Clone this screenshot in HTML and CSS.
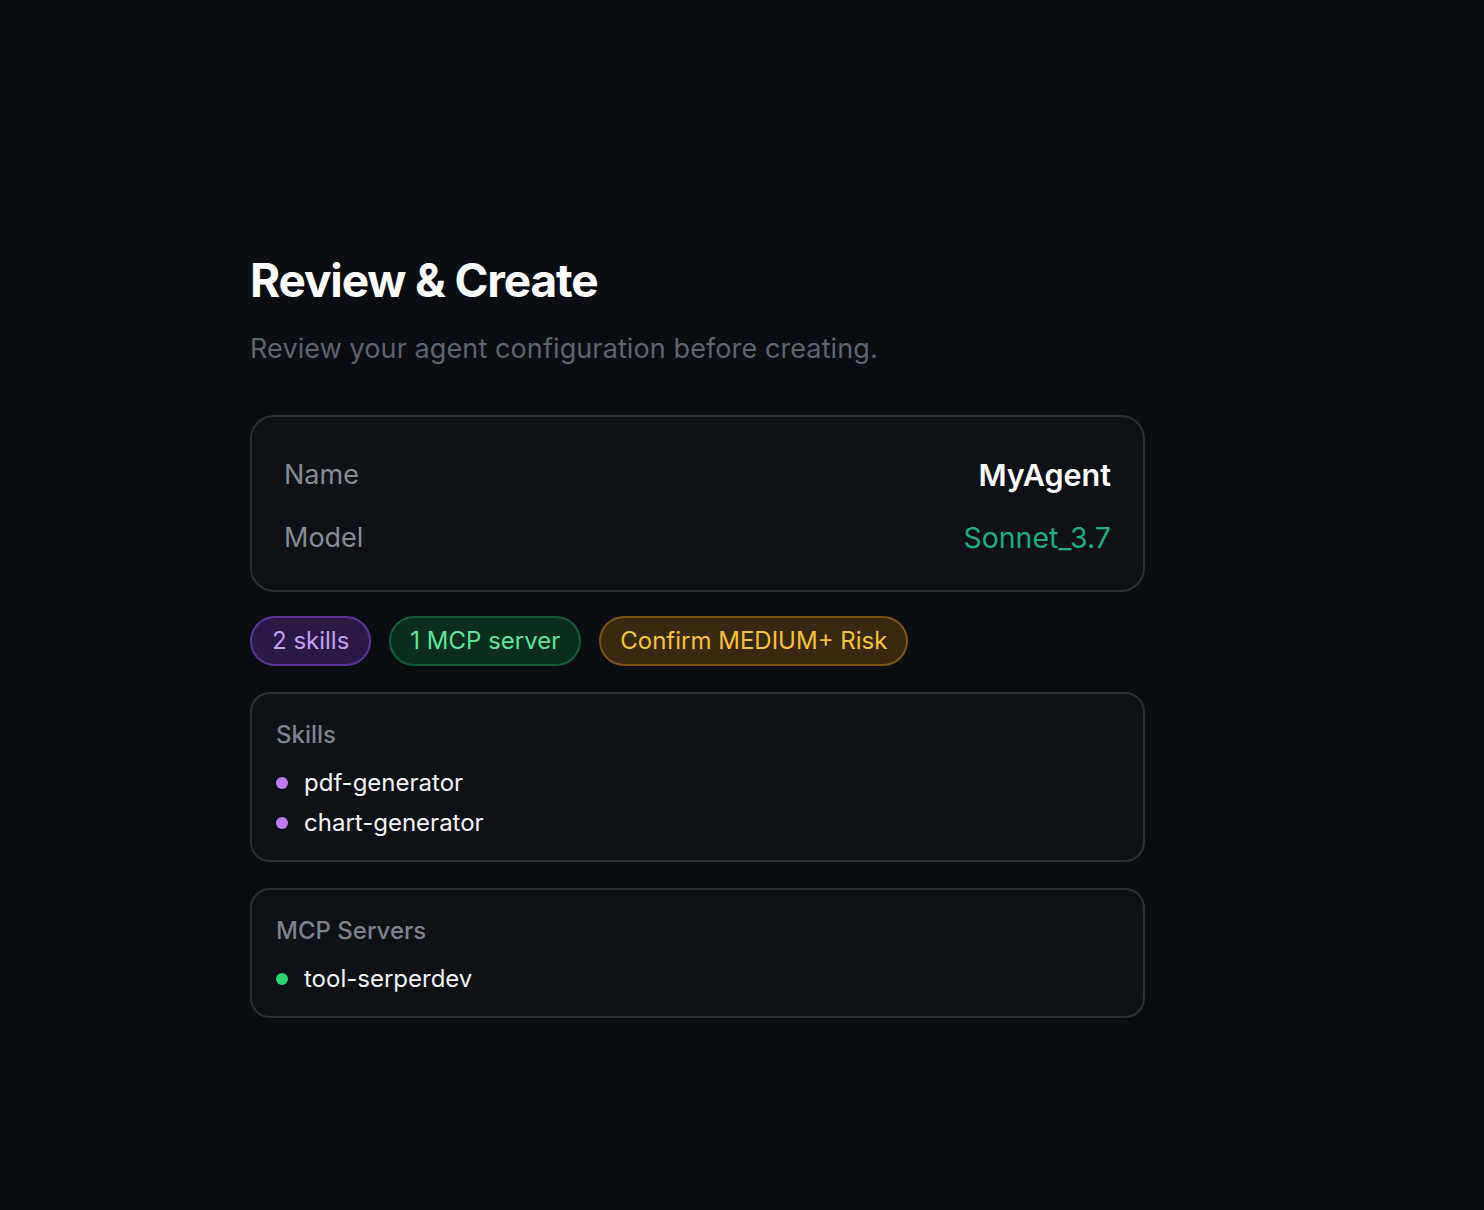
FILE: index.html
```html
<!DOCTYPE html>
<html>

<head>
  <title>Review &amp; Create</title>
  <link rel="stylesheet" href="styles.css">
</head>

<body>
  <main class="review">
    <h1>Review &amp; Create</h1>
    <p class="subtitle">Review your agent configuration before creating.</p>

    <section class="summary">
      <div class="row">
        <span class="label">Name</span>
        <span class="value name">MyAgent</span>
      </div>
      <div class="row">
        <span class="label">Model</span>
        <span class="value model">Sonnet_3.7</span>
      </div>
    </section>

    <div class="badges">
      <span class="badge skills">2 skills</span>
      <span class="badge mcp">1 MCP server</span>
      <span class="badge risk">Confirm MEDIUM+ Risk</span>
    </div>

    <section class="list-card">
      <h2>Skills</h2>
      <ul>
        <li class="purple">pdf-generator</li>
        <li class="purple">chart-generator</li>
      </ul>
    </section>

    <section class="list-card">
      <h2>MCP Servers</h2>
      <ul>
        <li class="green">tool-serperdev</li>
      </ul>
    </section>
  </main>
</body>

</html>
```

FILE: styles.css
```css
html {
  background-color: #0a0d12;
  color: #f4f5f7;
  font-family: Inter, "Noto Sans", sans-serif;
}

body {
  margin: 0;
}

.review {
  width: 895px;
  margin-left: 250px;
  padding-top: 252px;
  display: flex;
  flex-direction: column;
}

h1 {
  margin: 0;
  font-size: 46px;
  line-height: 56px;
  font-weight: 700;
  letter-spacing: -0.025em;
  color: #ffffff;
}

.subtitle {
  margin: 24px 0 49px;
  font-size: 27px;
  line-height: 34px;
  letter-spacing: 0.1px;
  color: #5d6470;
}

.summary {
  background-color: #0e1116;
  border: 2px solid #2c3036;
  border-radius: 24px;
  padding: 36px 32px 30px;
  display: flex;
  flex-direction: column;
  gap: 19px;
}

.row {
  display: flex;
  justify-content: space-between;
  align-items: center;
  line-height: 44px;
}

.label {
  font-size: 27px;
  color: #858c96;
}

.name {
  font-size: 30.5px;
  font-weight: 600;
  color: #ffffff;
}

.model {
  font-size: 28.5px;
  color: #1fae7e;
}

.badges {
  display: flex;
  align-items: flex-start;
  gap: 18px;
  margin: 24px 0 26px;
}

.badge {
  font-size: 24px;
  line-height: 46px;
  padding: 0 20px;
  border: 2px solid;
  border-radius: 999px;
}

.badge.skills {
  background-color: #281947;
  border-color: #5b3596;
  color: #c89ff6;
}

.badge.mcp {
  background-color: #0a2d1d;
  border-color: #135c35;
  color: #5ee39d;
  padding: 0 19px;
}

.badge.risk {
  background-color: #3a2911;
  border-color: #7d5417;
  color: #f7c23f;
  padding: 0 19px;
}

.list-card {
  background-color: #0e1116;
  border: 2px solid #2c3036;
  border-radius: 20px;
  padding: 25px 24px 17px;
  margin-bottom: 26px;
}

h2 {
  margin: 0 0 12px;
  font-size: 24px;
  line-height: 32px;
  font-weight: 500;
  color: #7b838e;
}

ul {
  list-style: none;
  margin: 0;
  padding: 0;
}

li {
  display: flex;
  align-items: center;
  gap: 16px;
  font-size: 24px;
  line-height: 40px;
  color: #f4f5f7;
}

li::before {
  content: "";
  width: 12px;
  height: 12px;
  border-radius: 50%;
}

li.purple::before {
  background-color: #b97cf6;
}

li.green::before {
  background-color: #2bd471;
}
```
